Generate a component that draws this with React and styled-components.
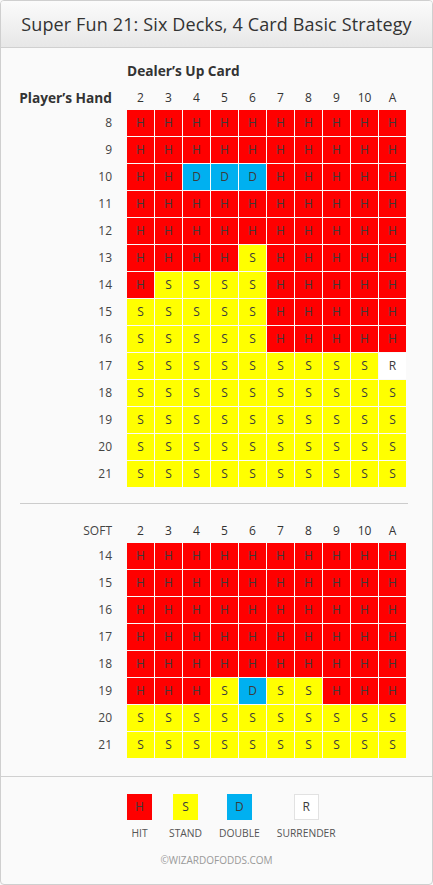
import styled, { createGlobalStyle } from "styled-components";

const GlobalStyle = createGlobalStyle`
  body {
    margin: 0;
    background: #fafafa;
    font-family: "Open Sans", "Noto Sans", sans-serif;
  }
`;

const COLORS = {
  H: "#ff0000",
  S: "#ffff00",
  D: "#00b0f0",
  R: "#ffffff",
};

const UP_CARDS = ["2", "3", "4", "5", "6", "7", "8", "9", "10", "A"];

const row = (s) => s.split("");

const HARD = [
  ["8", row("HHHHHHHHHH")],
  ["9", row("HHHHHHHHHH")],
  ["10", row("HHDDDHHHHH")],
  ["11", row("HHHHHHHHHH")],
  ["12", row("HHHHHHHHHH")],
  ["13", row("HHHHSHHHHH")],
  ["14", row("HSSSSHHHHH")],
  ["15", row("SSSSSHHHHH")],
  ["16", row("SSSSSHHHHH")],
  ["17", row("SSSSSSSSSR")],
  ["18", row("SSSSSSSSSS")],
  ["19", row("SSSSSSSSSS")],
  ["20", row("SSSSSSSSSS")],
  ["21", row("SSSSSSSSSS")],
];

const SOFT = [
  ["14", row("HHHHHHHHHH")],
  ["15", row("HHHHHHHHHH")],
  ["16", row("HHHHHHHHHH")],
  ["17", row("HHHHHHHHHH")],
  ["18", row("HHHHHHHHHH")],
  ["19", row("HHHSDSSHHH")],
  ["20", row("SSSSSSSSSS")],
  ["21", row("SSSSSSSSSS")],
];

const LEGEND = [
  ["H", "Hit"],
  ["S", "Stand"],
  ["D", "Double"],
  ["R", "Surrender"],
];

const Card = styled.div`
  width: 433px;
  height: 885px;
  box-sizing: border-box;
  border: 1px solid #cfcfcf;
  border-radius: 4px;
  background: #fafafa;
  overflow: hidden;
  display: flex;
  flex-direction: column;
`;

const TitleBar = styled.div`
  height: 46px;
  flex-shrink: 0;
  display: flex;
  align-items: center;
  justify-content: center;
  background: linear-gradient(#fbfbfb, #e7e7e7);
  border-bottom: 1px solid #d0d0d0;
  color: #333;
  font-size: 18px;
  letter-spacing: 0.14px;
`;

const Body = styled.div`
  padding: 13px 24px 0 18px;
`;

const Caption = styled.div`
  padding-left: 108px;
  height: 20px;
  line-height: 20px;
  font-size: 13.7px;
  font-weight: 700;
  color: #333;
  margin-bottom: 7px;
`;

const Table = styled.div`
  display: flex;
  flex-direction: column;
  gap: 1px;
`;

const Row = styled.div`
  display: grid;
  grid-template-columns: 107px repeat(10, 27px);
  column-gap: 1px;
  height: ${(p) => (p.$head ? "21px" : "26px")};
`;

const Label = styled.div`
  padding-right: 14px;
  text-align: right;
  line-height: ${(p) => (p.$head ? "20px" : "26px")};
  font-size: ${(p) => (p.$bold ? "13.7px" : "12px")};
  font-weight: ${(p) => (p.$bold ? 700 : 400)};
  color: ${(p) => (p.$bold ? "#333" : "#444")};
  white-space: nowrap;
`;

const HeadCell = styled.div`
  text-align: center;
  line-height: 20px;
  font-size: 12px;
  color: #333;
`;

const Cell = styled.div`
  background: ${(p) => COLORS[p.$a]};
  color: #3c3c3c;
  font-size: 12px;
  line-height: 26px;
  text-align: center;
`;

const Divider = styled.hr`
  border: none;
  border-top: 1px solid #cccccc;
  margin: 16px 0 17px 1px;
`;

const Footer = styled.div`
  margin-top: auto;
  box-sizing: border-box;
  height: 108px;
  border-top: 1px solid #d0d0d0;
  padding-top: 17px;
`;

const Legend = styled.div`
  display: flex;
  gap: 17px;
  padding-left: 126px;
`;

const LegendItem = styled.div`
  display: flex;
  flex-direction: column;
  align-items: center;
  gap: 6px;
`;

const Swatch = styled.div`
  width: 25px;
  height: 26px;
  box-sizing: border-box;
  background: ${(p) => COLORS[p.$a]};
  border: ${(p) => (p.$a === "R" ? "1px solid #e2e2e2" : "none")};
  color: #3c3c3c;
  font-size: 12px;
  line-height: ${(p) => (p.$a === "R" ? "24px" : "26px")};
  text-align: center;
`;

const LegendText = styled.div`
  font-size: 10.3px;
  line-height: 14px;
  text-transform: uppercase;
  color: #555;
`;

const Copyright = styled.div`
  margin-top: 13px;
  text-align: center;
  font-size: 10px;
  line-height: 14px;
  color: #999;
`;

function Chart({ head, bold, rows }) {
  return (
    <Table>
      <Row $head>
        <Label $head $bold={bold}>
          {head}
        </Label>
        {UP_CARDS.map((c) => (
          <HeadCell key={c}>{c}</HeadCell>
        ))}
      </Row>
      {rows.map(([hand, acts]) => (
        <Row key={hand}>
          <Label>{hand}</Label>
          {acts.map((a, i) => (
            <Cell key={i} $a={a}>
              {a}
            </Cell>
          ))}
        </Row>
      ))}
    </Table>
  );
}

export default function App() {
  return (
    <>
      <GlobalStyle />
      <Card>
        <TitleBar>Super Fun 21: Six Decks, 4 Card Basic Strategy</TitleBar>
        <Body>
          <Caption>Dealer’s Up Card</Caption>
          <Chart head="Player’s Hand" bold rows={HARD} />
          <Divider />
          <Chart head="SOFT" rows={SOFT} />
        </Body>
        <Footer>
          <Legend>
            {LEGEND.map(([a, name]) => (
              <LegendItem key={a}>
                <Swatch $a={a}>{a}</Swatch>
                <LegendText>{name}</LegendText>
              </LegendItem>
            ))}
          </Legend>
          <Copyright>©WIZARDOFODDS.COM</Copyright>
        </Footer>
      </Card>
    </>
  );
}
